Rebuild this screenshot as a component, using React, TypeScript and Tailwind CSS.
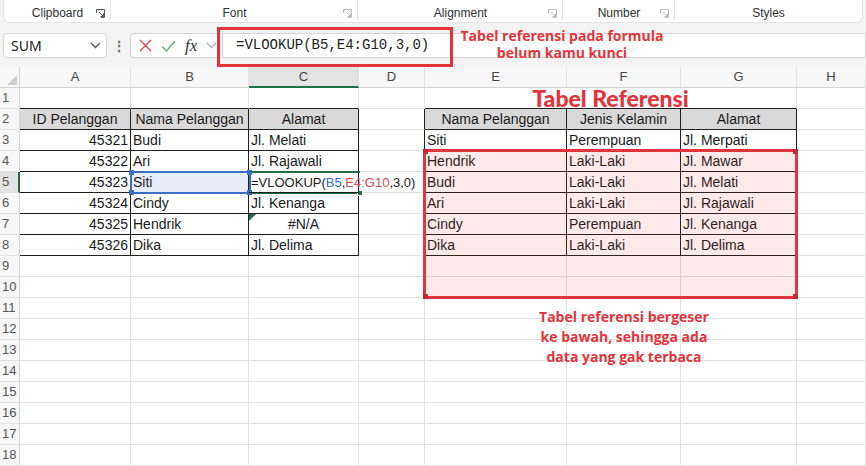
import React from 'react';

type Cell = { t: React.ReactNode; a?: 'l' | 'r' | 'c'; h?: boolean };

const COLS = ['A', 'B', 'C', 'D', 'E', 'F', 'G', 'H'];

const formula = (
  <span className="text-[13px]">
    =VLOOKUP(<span className="text-[#3a6cc6]">B5</span>,<span className="text-[#e0474f]">E4:G10</span>,3,0)
  </span>
);

const cells: Record<string, Cell> = {
  A2: { t: 'ID Pelanggan', a: 'c', h: true },
  B2: { t: 'Nama Pelanggan', a: 'c', h: true },
  C2: { t: 'Alamat', a: 'c', h: true },
  E2: { t: 'Nama Pelanggan', a: 'c', h: true },
  F2: { t: 'Jenis Kelamin', a: 'c', h: true },
  G2: { t: 'Alamat', a: 'c', h: true },
  A3: { t: '45321', a: 'r' }, B3: { t: 'Budi' }, C3: { t: 'Jl. Melati' },
  A4: { t: '45322', a: 'r' }, B4: { t: 'Ari' }, C4: { t: 'Jl. Rajawali' },
  A5: { t: '45323', a: 'r' }, B5: { t: 'Siti' }, C5: { t: formula },
  A6: { t: '45324', a: 'r' }, B6: { t: 'Cindy' }, C6: { t: 'Jl. Kenanga' },
  A7: { t: '45325', a: 'r' }, B7: { t: 'Hendrik' }, C7: { t: '#N/A', a: 'c' },
  A8: { t: '45326', a: 'r' }, B8: { t: 'Dika' }, C8: { t: 'Jl. Delima' },
  E3: { t: 'Siti' }, F3: { t: 'Perempuan' }, G3: { t: 'Jl. Merpati' },
  E4: { t: 'Hendrik' }, F4: { t: 'Laki-Laki' }, G4: { t: 'Jl. Mawar' },
  E5: { t: 'Budi' }, F5: { t: 'Laki-Laki' }, G5: { t: 'Jl. Melati' },
  E6: { t: 'Ari' }, F6: { t: 'Laki-Laki' }, G6: { t: 'Jl. Rajawali' },
  E7: { t: 'Cindy' }, F7: { t: 'Perempuan' }, G7: { t: 'Jl. Kenanga' },
  E8: { t: 'Dika' }, F8: { t: 'Laki-Laki' }, G8: { t: 'Jl. Delima' },
};

const inLeft = (c: number, r: number) => c >= 0 && c <= 2 && r >= 2 && r <= 8;
const inRight = (c: number, r: number) => c >= 4 && c <= 6 && r >= 2 && r <= 8;

const Launcher = ({ dark }: { dark?: boolean }) => (
  <svg width="9" height="9" viewBox="0 0 9 9" fill="none" stroke={dark ? '#555' : '#bbb'} strokeWidth="1">
    <path d="M0.5 4V0.5H8.5V8.5H5" />
    <path d="M3 3L7.5 7.5M7.5 4.5V7.5H4.5" />
  </svg>
);

const Group = ({ w, label, dark, last }: { w?: string; label: string; dark?: boolean; last?: boolean }) => (
  <div className={`relative flex items-center justify-center pt-[3px] ${w ?? 'flex-1'}`}>
    <span className="text-[12px] text-[#303030]">{label}</span>
    {!last && (
      <>
        <span className="absolute right-[6px] top-[9px] flex">
          <Launcher dark={dark} />
        </span>
        <span className="absolute right-0 top-0 h-[20px] w-px bg-[#e3e3e3]" />
      </>
    )}
  </div>
);

const Chevron = ({ color = '#555' }: { color?: string }) => (
  <svg width="11" height="7" viewBox="0 0 11 7" fill="none" stroke={color} strokeWidth="1.3">
    <path d="M1 1l4.5 4.5L10 1" />
  </svg>
);

function Sheet() {
  const rows = Array.from({ length: 18 }, (_, i) => i + 1);
  return (
    <div className="relative grid grid-cols-[20px_111px_118px_110px_66px_142px_114px_116px_1fr] text-[14px] text-[#1a1a1a]">
      {/* column headers */}
      <div className="relative h-[21px] border-r border-b border-[#d4d4d4] bg-[#f7f7f7]">
        <svg className="absolute right-[2px] bottom-[2px]" width="10" height="10" viewBox="0 0 10 10">
          <path d="M10 0V10H0Z" fill="#cfcfcf" />
        </svg>
      </div>
      {COLS.map((c) => (
        <div
          key={c}
          className={`flex h-[21px] items-center justify-center text-[13px] text-[#444] border-r border-[#e1e1e1] ${
            c === 'C' ? 'bg-[#e3e3e3] border-b-2 border-b-[#1e7145]' : 'bg-[#f7f7f7] border-b border-b-[#d4d4d4]'
          }`}
        >
          {c}
        </div>
      ))}

      {rows.map((r) => (
        <React.Fragment key={r}>
          <div
            className={`flex h-[21px] items-center pl-[2px] text-[13px] text-[#555] border-b border-[#e1e1e1] ${
              r === 5 ? 'bg-[#e3e3e3] border-r-2 border-r-[#1e7145]' : 'bg-[#f7f7f7] border-r border-r-[#d4d4d4]'
            }`}
          >
            {r}
          </div>
          {COLS.map((c, ci) => {
            if (r === 1 && (c === 'F' || c === 'G')) return null;
            if (r === 1 && c === 'E') {
              return (
                <div
                  key={c}
                  className="col-span-3 flex h-[21px] items-center justify-center border-r border-r-[#e1e1e1] border-b border-b-[#1f1f1f]"
                >
                  <span className="font-['Lato'] text-[23px] font-black leading-[20px] text-[#e5333b]">
                    Tabel Referensi
                  </span>
                </div>
              );
            }
            const cell = cells[`${c}${r}`];
            const blackR = inLeft(ci, r) || inRight(ci, r) || (ci === 3 && r >= 2 && r <= 8);
            const blackB = (ci <= 2 && r >= 1 && r <= 8) || (ci >= 4 && ci <= 6 && r >= 1 && r <= 8);
            const align = cell?.a === 'r' ? 'justify-end' : cell?.a === 'c' ? 'justify-center' : 'justify-start';
            return (
              <div
                key={c}
                className={`relative flex h-[21px] items-center whitespace-nowrap px-[2px] border-r border-b ${align} ${
                  blackR ? 'border-r-[#1f1f1f]' : 'border-r-[#e1e1e1]'
                } ${blackB ? 'border-b-[#1f1f1f]' : 'border-b-[#e1e1e1]'} ${cell?.h ? 'bg-[#d9d9d9]' : ''} ${
                  c === 'B' && r === 5 ? 'bg-[#e6edf8]' : ''
                } ${c === 'C' && r === 5 ? 'z-10 overflow-visible' : ''}`}
              >
                {c === 'C' && r === 7 && (
                  <svg className="absolute left-0 top-0" width="7" height="7" viewBox="0 0 7 7">
                    <path d="M0 0H7L0 7Z" fill="#1e7145" />
                  </svg>
                )}
                {cell && <span className="leading-none">{cell.t}</span>}
              </div>
            );
          })}
        </React.Fragment>
      ))}

      {/* reference range highlight */}
      <div className="pointer-events-none absolute left-[423px] top-[82px] h-[150px] w-[375px] border-[3px] border-[#e5333b] bg-[#e5333b]/10">
        <span className="absolute -left-[3px] -top-[3px] h-[5px] w-[5px] bg-[#c02a32]" />
        <span className="absolute -right-[3px] -top-[3px] h-[5px] w-[5px] bg-[#c02a32]" />
        <span className="absolute -left-[3px] -bottom-[3px] h-[5px] w-[5px] bg-[#c02a32]" />
        <span className="absolute -right-[3px] -bottom-[3px] h-[5px] w-[5px] bg-[#c02a32]" />
      </div>

      {/* B5 reference highlight */}
      <div className="pointer-events-none absolute left-[130px] top-[104px] h-[23px] w-[121px] border-2 border-[#3c6fc4]">
        <span className="absolute -left-[3px] -top-[3px] h-[5px] w-[5px] bg-[#3c6fc4]" />
        <span className="absolute -right-[3px] -top-[3px] h-[5px] w-[5px] bg-[#3c6fc4]" />
        <span className="absolute -left-[3px] -bottom-[3px] h-[5px] w-[5px] bg-[#3c6fc4]" />
        <span className="absolute -right-[3px] -bottom-[3px] h-[5px] w-[5px] bg-[#3c6fc4]" />
      </div>

      {/* C5 active cell */}
      <div className="pointer-events-none absolute left-[251px] top-[104px] h-[23px] w-[109px] border-y-2 border-[#1e7145]">
        <span className="absolute -right-[3px] -bottom-[4px] h-[6px] w-[6px] bg-[#1e7145] border border-white" />
      </div>

      {/* bottom annotation */}
      <div className="pointer-events-none absolute left-[514px] top-[240px] w-[220px] text-center font-['Open_Sans'] text-[14px] font-bold leading-[20px] text-[#e5333b]">
        Tabel referensi bergeser
        <br />
        ke bawah, sehingga ada
        <br />
        data yang gak terbaca
      </div>
    </div>
  );
}

export default function App() {
  return (
    <div className="relative h-[466px] w-[866px] overflow-hidden bg-white font-['Liberation_Sans',sans-serif]">
      {/* ribbon */}
      <div className="h-[27px] bg-[#f3f3f3] px-[3px]">
        <div className="flex h-[23px] rounded-b-[7px] border-x border-b border-[#e4e4e4] bg-white">
          <Group w="w-[107px]" label="Clipboard" dark />
          <Group w="w-[247px]" label="Font" />
          <Group w="w-[205px]" label="Alignment" />
          <Group w="w-[112px]" label="Number" />
          <Group label="Styles" last />
        </div>
      </div>

      {/* formula bar */}
      <div className="flex h-[40px] items-start gap-0 bg-[#f3f3f3] pt-[6px]">
        <div className="ml-[3px] flex h-[25px] w-[104px] items-center justify-between rounded-[4px] border border-[#d4d4d4] bg-white pl-[7px] pr-[5px]">
          <span className="font-['Noto_Sans'] text-[14px] text-[#222]">SUM</span>
          <Chevron />
        </div>
        <div className="flex h-[25px] w-[23px] items-center justify-center text-[14px] font-bold leading-none text-[#666]">⋮</div>
        <div className="flex h-[25px] w-[90px] items-center gap-[9px] rounded-l-[4px] border border-r-0 border-[#d4d4d4] bg-white pl-[8px]">
          <svg width="13" height="13" viewBox="0 0 13 13" stroke="#e0474f" strokeWidth="1.4">
            <path d="M1 1l11 11M12 1L1 12" />
          </svg>
          <svg width="15" height="12" viewBox="0 0 15 12" fill="none" stroke="#6aae7a" strokeWidth="1.4">
            <path d="M1 6.5l4.5 4.5L14 1" />
          </svg>
          <span className="font-['Liberation_Serif'] text-[17px] italic leading-none text-[#333]">fx</span>
          <Chevron color="#aaa" />
        </div>
        <div className="ml-[2px] flex h-[25px] flex-1 items-center border border-[#d4d4d4] bg-white pl-[13px]">
          <span className="font-['Liberation_Mono'] text-[14px] text-[#222]">=VLOOKUP(B5,E4:G10,3,0)</span>
        </div>
      </div>

      <Sheet />

      {/* top annotation */}
      <div className="pointer-events-none absolute left-[217px] top-[27px] h-[40px] w-[236px] border-[3px] border-[#e5333b]" />
      <div className="pointer-events-none absolute left-[452px] top-[27px] w-[220px] text-center font-['Open_Sans'] text-[14px] font-bold leading-[17px] text-[#e5333b]">
        Tabel referensi pada formula
        <br />
        belum kamu kunci
      </div>
    </div>
  );
}
